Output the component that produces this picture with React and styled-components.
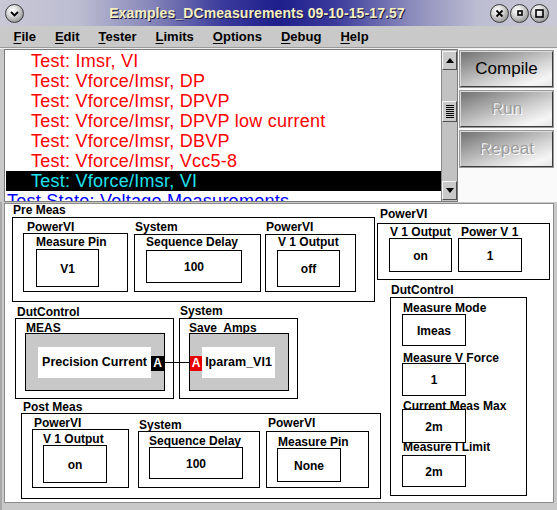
import React from "react";
import styled, { createGlobalStyle } from "styled-components";

const GlobalStyle = createGlobalStyle`
  html, body {
    margin: 0;
    padding: 0;
  }
  body {
    background: #c9c9c9;
    font-family: "Liberation Sans", Arial, sans-serif;
  }
`;

const Window = styled.div`
  width: 557px;
  height: 510px;
  overflow: hidden;
  background: #c9c9c9;
  display: flex;
  flex-direction: column;
`;

/* ---------- title bar ---------- */

const TitleBar = styled.div`
  flex: 0 0 26px;
  display: flex;
  align-items: center;
  padding: 0 8px 0 5px;
  background: linear-gradient(
    90deg,
    #c8c8d6 0%,
    #bdbdd2 14%,
    #8c8cbc 26%,
    #3a3a9c 40%,
    #1e1e8c 50%,
    #3a3a9c 60%,
    #8c8cbc 74%,
    #bdbdd2 86%,
    #c8c8d6 100%
  );
`;

const TitleText = styled.div`
  flex: 1;
  text-align: center;
  font: bold 14px "Liberation Sans", Arial, sans-serif;
  letter-spacing: 0.1px;
  color: #f6efc2;
  text-shadow: 1px 1px 0 #1a1a40;
  white-space: nowrap;
`;

const RoundButton = styled.div`
  width: 19px;
  height: 19px;
  box-sizing: border-box;
  border-radius: 50%;
  border: 1px solid #3c3c3c;
  margin-left: ${({ $ml }) => $ml || 0}px;
  background: radial-gradient(circle at 38% 32%, #ffffff 0%, #e2e2e2 30%, #a4a4a4 70%, #5e5e5e 100%);
  display: flex;
  align-items: center;
  justify-content: center;
`;

const RightButtons = styled.div`
  display: flex;
  align-items: center;
`;

/* ---------- menu ---------- */

const MenuBar = styled.div`
  flex: 0 0 21px;
  display: flex;
  align-items: center;
  padding-left: 4px;
  border-bottom: 1px solid #9a9a9a;
  box-shadow: 0 1px 0 #efefef;
`;

const MenuItem = styled.div`
  padding: 0 9.5px;
  font: bold 13px/21px "Liberation Sans", Arial, sans-serif;
  color: #000;
  u {
    text-decoration: underline;
    text-underline-offset: 2px;
  }
`;

/* ---------- test list ---------- */

const TopArea = styled.div`
  flex: 0 0 154px;
  box-sizing: border-box;
  display: flex;
  padding: 1px 0 0 4px;
`;

const ListFrame = styled.div`
  width: 454px;
  height: 153px;
  box-sizing: border-box;
  border: 1px solid #7c7c7c;
  display: flex;
`;

const List = styled.div`
  flex: 1;
  background: #fff;
  overflow: hidden;
  padding: 1px 0 0 1px;
`;

const Row = styled.div`
  height: 20px;
  line-height: 20px;
  padding-left: ${({ $flush }) => ($flush ? 1 : 25)}px;
  font-size: 18px;
  letter-spacing: 0.25px;
  white-space: nowrap;
  color: ${({ $color }) => $color};
  background: ${({ $selected }) => ($selected ? "#000" : "transparent")};
`;

const ScrollTrack = styled.div`
  width: 15px;
  background: #c2c2c2;
  border-left: 1px solid #8a8a8a;
  display: flex;
  flex-direction: column;
  padding: 1px 0;
`;

const ScrollButton = styled.div`
  height: 19px;
  box-sizing: border-box;
  background: #cacaca;
  border: 1px solid;
  border-color: #f6f6f6 #505050 #505050 #f6f6f6;
  display: flex;
  align-items: center;
  justify-content: center;
`;

const Arrow = styled.div`
  width: 0;
  height: 0;
  border-left: 4px solid transparent;
  border-right: 4px solid transparent;
  ${({ $up }) => ($up ? "border-bottom: 5px solid #000;" : "border-top: 5px solid #000;")}
`;

const Thumb = styled(ScrollButton)`
  height: 21px;
  margin-top: 31px;
`;

const Grip = styled.div`
  width: 8px;
  height: 13px;
  background: repeating-linear-gradient(#000 0 1px, #cacaca 1px 2px);
`;

const Spacer = styled.div`
  flex: 1;
`;

const SidePanel = styled.div`
  flex: 1;
  background: #fafafa;
  padding: 2px 0 0 2px;
  display: flex;
  flex-direction: column;
  gap: 4px;
`;

const ActionButton = styled.div`
  width: 93px;
  height: 36px;
  box-sizing: border-box;
  border: 1px solid;
  border-color: #dcdcdc #3c3c3c #3c3c3c #dcdcdc;
  outline: 1px solid #9a9a9a;
  background: linear-gradient(160deg, #727272 0%, #a2a2a2 30%, #d6d6d6 62%, #f6f6f6 85%, #e6e6e6 100%);
  display: flex;
  align-items: center;
  justify-content: center;
  font-size: 17px;
  color: ${({ $disabled }) => ($disabled ? "#9c9c9c" : "#000")};
  text-shadow: ${({ $disabled }) => ($disabled ? "1px 1px 0 #ffffff" : "none")};
`;

/* ---------- flow canvas ---------- */

const CanvasWrap = styled.div`
  flex: 1;
  box-sizing: border-box;
  display: flex;
  padding: 1px 3px 7px 4px;
  border-left: 2px solid #a8a8a8;
  padding-left: 2px;
`;

const Canvas = styled.div`
  flex: 1;
  position: relative;
  background: #fff;
  border: 1px solid #8c8c8c;
  overflow: hidden;
`;

const Node = styled.div`
  position: absolute;
  left: ${({ $x }) => $x}px;
  top: ${({ $y }) => $y}px;
  display: flex;
  flex-direction: column;
  align-items: flex-start;
`;

const Caption = styled.div`
  font: bold 12px/13px "Liberation Sans", Arial, sans-serif;
  color: #000;
  white-space: pre;
  padding-left: ${({ $pad }) => $pad || 0}px;
  margin-bottom: ${({ $gap }) => $gap || 0}px;
`;

const Frame = styled.div`
  width: ${({ $w }) => $w}px;
  height: ${({ $h }) => $h}px;
  box-sizing: border-box;
  border: 1px solid #000;
  display: flex;
  flex-direction: ${({ $column }) => ($column ? "column" : "row")};
  align-items: flex-start;
  padding: ${({ $pt }) => $pt || 0}px 0 0 ${({ $pl }) => $pl || 0}px;
  gap: ${({ $gap }) => $gap || 0}px;
`;

const SubNode = styled.div`
  display: flex;
  flex-direction: column;
  align-items: flex-start;
  margin-top: ${({ $mt }) => $mt || 0}px;
  margin-left: ${({ $ml }) => $ml || 0}px;
`;

const SubBox = styled.div`
  width: ${({ $w }) => $w}px;
  height: ${({ $h }) => $h}px;
  box-sizing: border-box;
  border: 1px solid #000;
  margin-top: ${({ $gap }) => $gap || 0}px;
  padding: ${({ $pt }) => $pt}px 0 0 ${({ $pl }) => $pl}px;
  display: flex;
  flex-direction: column;
  align-items: flex-start;
`;

const Field = styled.div`
  display: flex;
  flex-direction: column;
  align-items: flex-start;
`;

const FieldTitle = styled.div`
  font: bold 12px/12px "Liberation Sans", Arial, sans-serif;
  color: #000;
  white-space: pre;
  padding-left: ${({ $pad }) => $pad || 0}px;
  margin-top: ${({ $mt }) => $mt || 0}px;
`;

const ValueBox = styled.div`
  width: ${({ $w }) => $w}px;
  height: ${({ $h }) => $h}px;
  box-sizing: border-box;
  border: 1px solid #000;
  margin-top: ${({ $mt }) => $mt || 0}px;
  display: flex;
  align-items: center;
  justify-content: center;
  padding-top: 1px;
  font: bold 12px "Liberation Sans", Arial, sans-serif;
  color: #000;
`;

const Block = styled.div`
  width: ${({ $w }) => $w}px;
  height: 58px;
  box-sizing: border-box;
  border: 1px solid #000;
  background: #c8c8c8;
  margin-top: -1px;
  padding-left: ${({ $pl }) => $pl}px;
  display: flex;
  align-items: center;
`;

const BlockLabel = styled.div`
  width: ${({ $w }) => $w}px;
  height: 31px;
  background: #fff;
  display: flex;
  align-items: center;
  justify-content: center;
  font: bold 12.5px "Liberation Sans", Arial, sans-serif;
  color: #000;
  white-space: nowrap;
`;

const Port = styled.div`
  width: ${({ $w }) => $w}px;
  height: 15px;
  margin-top: 2px;
  background: ${({ $red }) => ($red ? "#e80000" : "#000")};
  color: #fff;
  font: bold 12px/15px "Liberation Sans", Arial, sans-serif;
  text-align: center;
`;

const Wire = styled.div`
  position: absolute;
  left: 159px;
  top: 158px;
  width: 26px;
  height: 1px;
  background: #000;
`;

/* ---------- data ---------- */

const tests = [
  { text: "Test: Imsr, VI", color: "#ff0000" },
  { text: "Test: Vforce/Imsr, DP", color: "#ff0000" },
  { text: "Test: Vforce/Imsr, DPVP", color: "#ff0000" },
  { text: "Test: Vforce/Imsr, DPVP low current", color: "#ff0000" },
  { text: "Test: Vforce/Imsr, DBVP", color: "#ff0000" },
  { text: "Test: Vforce/Imsr, Vcc5-8", color: "#ff0000" },
  { text: "Test: Vforce/Imsr, VI", color: "#1fe3ee", selected: true },
  { text: "Test State: Voltage Measurements", color: "#0000ff", state: true },
];

const menus = ["File", "Edit", "Tester", "Limits", "Options", "Debug", "Help"];

const preMeas = [
  { cap: "PowerVI", capPad: 4, boxGap: -1, w: 105, h: 59, pl: 12, pt: 2, title: "Measure Pin", iGap: 1, iw: 63, ih: 38, value: "V1" },
  { cap: "System", capPad: 1, ml: 6, w: 127, h: 58, pl: 11, pt: 1, title: "Sequence Delay", iGap: 2, iw: 96, ih: 33, value: "100" },
  { cap: "PowerVI", capPad: 1, ml: 4, w: 91, h: 58, pl: 11, pt: 1, title: "V 1 Output", tPad: 1, iGap: 2, iw: 63, ih: 37, value: "off" },
];

const postMeas = [
  { cap: "PowerVI", capPad: 2, boxGap: -1, w: 97, h: 59, pl: 10, pt: 3, title: "V 1 Output", iw: 64, ih: 38, value: "on" },
  { cap: "System", capPad: 1, ml: 9, mt: 2, boxGap: -1, w: 122, h: 57, pl: 10, pt: 3, title: "Sequence Delay", iw: 94, ih: 32, value: "100" },
  { cap: "PowerVI", capPad: 2, ml: 6, boxGap: 1, w: 103, h: 57, pl: 10, pt: 4, title: "Measure Pin", tPad: 1, iw: 64, ih: 34, value: "None" },
];

const dutFields = [
  { title: "Measure Mode", iGap: 0, ih: 32, value: "Imeas" },
  { title: "Measure V Force", tGap: 6, iGap: -1, ih: 33, value: "1" },
  { title: "Current Meas Max", tGap: 4, iGap: -3, ih: 34, value: "2m" },
  { title: "Measure I Limit", tGap: -2, iGap: 2, ih: 32, value: "2m" },
];

/* ---------- icons ---------- */

const Chevron = () => (
  <svg width="11" height="11" viewBox="0 0 11 11">
    <path d="M2 4 L5.5 7.5 L9 4" fill="none" stroke="#000" strokeWidth="1.8" />
  </svg>
);

const CloseIcon = () => (
  <svg width="9" height="9" viewBox="0 0 9 9">
    <path d="M1.5 1.5 L7.5 7.5 M7.5 1.5 L1.5 7.5" stroke="#000" strokeWidth="1.8" />
  </svg>
);

const SquareIcon = ({ size }) => (
  <svg width={size + 2} height={size + 2} viewBox={`0 0 ${size + 2} ${size + 2}`}>
    <rect x="1" y="1" width={size} height={size} fill="none" stroke="#000" strokeWidth="1.6" />
  </svg>
);

/* ---------- parts ---------- */

const MeasNode = ({ n }) => (
  <SubNode $mt={n.mt} $ml={n.ml}>
    <Caption $pad={n.capPad}>{n.cap}</Caption>
    <SubBox $w={n.w} $h={n.h} $gap={n.boxGap} $pt={n.pt} $pl={n.pl}>
      <FieldTitle $pad={n.tPad}>{n.title}</FieldTitle>
      <ValueBox $w={n.iw} $h={n.ih} $mt={n.iGap}>{n.value}</ValueBox>
    </SubBox>
  </SubNode>
);

const App = () => {
  return (
    <Window>
      <GlobalStyle />
      <TitleBar>
        <RoundButton>
          <Chevron />
        </RoundButton>
        <TitleText>Examples_DCmeasurements 09-10-15-17.57</TitleText>
        <RightButtons>
          <RoundButton>
            <CloseIcon />
          </RoundButton>
          <RoundButton $ml={1}>
            <SquareIcon size={4} />
          </RoundButton>
          <RoundButton $ml={1}>
            <SquareIcon size={7} />
          </RoundButton>
        </RightButtons>
      </TitleBar>

      <MenuBar>
        {menus.map((m) => (
          <MenuItem key={m}>
            <u>{m[0]}</u>
            {m.slice(1)}
          </MenuItem>
        ))}
      </MenuBar>

      <TopArea>
        <ListFrame>
          <List>
            {tests.map((t) => (
              <Row key={t.text} $color={t.color} $selected={t.selected} $flush={t.state}>
                {t.text}
              </Row>
            ))}
          </List>
          <ScrollTrack>
            <ScrollButton>
              <Arrow $up />
            </ScrollButton>
            <Thumb>
              <Grip />
            </Thumb>
            <Spacer />
            <ScrollButton>
              <Arrow />
            </ScrollButton>
          </ScrollTrack>
        </ListFrame>
        <SidePanel>
          <ActionButton>Compile</ActionButton>
          <ActionButton $disabled>Run</ActionButton>
          <ActionButton $disabled>Repeat</ActionButton>
        </SidePanel>
      </TopArea>

      <CanvasWrap>
        <Canvas>
          <Node $x={7} $y={0}>
            <Caption $pad={1}>Pre Meas</Caption>
            <Frame $w={363} $h={85} $pt={3} $pl={10}>
              {preMeas.map((n, i) => (
                <MeasNode key={i} n={n} />
              ))}
            </Frame>
          </Node>

          <Node $x={372} $y={4}>
            <Caption $pad={3} $gap={2}>PowerVI</Caption>
            <Frame $w={173} $h={57} $pt={2} $pl={11} $gap={6}>
              <Field>
                <FieldTitle $pad={1}>V 1 Output</FieldTitle>
                <ValueBox $w={63} $h={34}>on</ValueBox>
              </Field>
              <Field>
                <FieldTitle $pad={3}>Power V 1</FieldTitle>
                <ValueBox $w={64} $h={34}>1</ValueBox>
              </Field>
            </Frame>
          </Node>

          <Node $x={10} $y={102}>
            <Caption $pad={2} $gap={-1}>DutControl</Caption>
            <Frame $w={159} $h={81} $pt={3} $pl={9} $column>
              <FieldTitle $pad={1}>MEAS</FieldTitle>
              <Block $w={140} $pl={12}>
                <BlockLabel $w={113}>Precision Current</BlockLabel>
                <Port $w={13}>A</Port>
              </Block>
            </Frame>
          </Node>

          <Node $x={174} $y={101}>
            <Caption $pad={1}>System</Caption>
            <Frame $w={119} $h={81} $pt={3} $pl={9} $column>
              <FieldTitle>Save  Amps</FieldTitle>
              <Block $w={100} $pl={0}>
                <Port $w={12} $red>A</Port>
                <BlockLabel $w={73}>Iparam_VI1</BlockLabel>
              </Block>
            </Frame>
          </Node>

          <Wire />

          <Node $x={385} $y={80}>
            <Caption $pad={1}>DutControl</Caption>
            <Frame $w={137} $h={199} $pt={4} $pl={11} $column>
              {dutFields.map((f) => (
                <Field key={f.title}>
                  <FieldTitle $pad={1} $mt={f.tGap}>{f.title}</FieldTitle>
                  <ValueBox $w={64} $h={f.ih} $mt={f.iGap}>{f.value}</ValueBox>
                </Field>
              ))}
            </Frame>
          </Node>

          <Node $x={16} $y={197}>
            <Caption $pad={2} $gap={-1}>Post Meas</Caption>
            <Frame $w={360} $h={86} $pt={3} $pl={10}>
              {postMeas.map((n, i) => (
                <MeasNode key={i} n={n} />
              ))}
            </Frame>
          </Node>
        </Canvas>
      </CanvasWrap>
    </Window>
  );
};

export default App;
